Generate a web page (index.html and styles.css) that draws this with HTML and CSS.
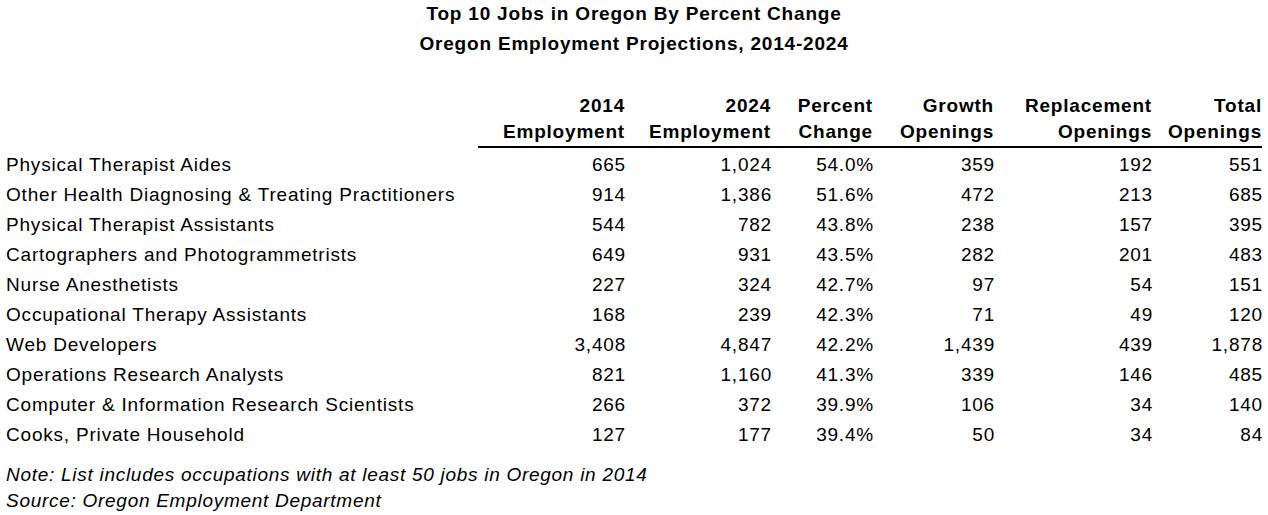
FILE: index.html
```html
<!DOCTYPE html>
<html lang="en">
<head>
    <meta charset="UTF-8">
    <title>Top 10 Jobs in Oregon By Percent Change</title>
    <link rel="stylesheet" href="styles.css">
</head>
<body>
    <div class="page">
        <div class="titles">
            <h1>Top 10 Jobs in Oregon By Percent Change</h1>
            <h2>Oregon Employment Projections, 2014-2024</h2>
        </div>

        <div class="jobs-table">
            <div class="head blank"></div>
            <div class="head">2014<br>Employment</div>
            <div class="head">2024<br>Employment</div>
            <div class="head">Percent<br>Change</div>
            <div class="head">Growth<br>Openings</div>
            <div class="head">Replacement<br>Openings</div>
            <div class="head">Total<br>Openings</div>

            <div class="name">Physical Therapist Aides</div>
            <div>665</div><div>1,024</div><div>54.0%</div><div>359</div><div>192</div><div>551</div>

            <div class="name">Other Health Diagnosing &amp; Treating Practitioners</div>
            <div>914</div><div>1,386</div><div>51.6%</div><div>472</div><div>213</div><div>685</div>

            <div class="name">Physical Therapist Assistants</div>
            <div>544</div><div>782</div><div>43.8%</div><div>238</div><div>157</div><div>395</div>

            <div class="name">Cartographers and Photogrammetrists</div>
            <div>649</div><div>931</div><div>43.5%</div><div>282</div><div>201</div><div>483</div>

            <div class="name">Nurse Anesthetists</div>
            <div>227</div><div>324</div><div>42.7%</div><div>97</div><div>54</div><div>151</div>

            <div class="name">Occupational Therapy Assistants</div>
            <div>168</div><div>239</div><div>42.3%</div><div>71</div><div>49</div><div>120</div>

            <div class="name">Web Developers</div>
            <div>3,408</div><div>4,847</div><div>42.2%</div><div>1,439</div><div>439</div><div>1,878</div>

            <div class="name">Operations Research Analysts</div>
            <div>821</div><div>1,160</div><div>41.3%</div><div>339</div><div>146</div><div>485</div>

            <div class="name">Computer &amp; Information Research Scientists</div>
            <div>266</div><div>372</div><div>39.9%</div><div>106</div><div>34</div><div>140</div>

            <div class="name">Cooks, Private Household</div>
            <div>127</div><div>177</div><div>39.4%</div><div>50</div><div>34</div><div>84</div>
        </div>

        <div class="notes">
            <p>Note: List includes occupations with at least 50 jobs in Oregon in 2014</p>
            <p>Source: Oregon Employment Department</p>
        </div>
    </div>
</body>
</html>
```

FILE: styles.css
```css
* {
    margin: 0;
    padding: 0;
    box-sizing: border-box;
}

body {
    background: #fff;
    color: #000;
    font-family: 'Liberation Sans', Arial, sans-serif;
    font-size: 19px;
    letter-spacing: 0.8px;
}

.page {
    width: 1268px;
}

.titles {
    text-align: center;
    font-weight: bold;
    line-height: 30px;
    margin-top: -1px;
}

.titles h1,
.titles h2 {
    font-size: inherit;
}

.jobs-table {
    display: grid;
    grid-template-columns: 478px 147px 146px 102px 121px 158px 110px;
    margin-top: 34px;
    line-height: 30px;
}

.jobs-table > div {
    text-align: right;
    white-space: nowrap;
    margin-right: -1px;
}

.jobs-table .head {
    font-weight: bold;
    line-height: 26px;
    padding-bottom: 1px;
    border-bottom: 2px solid #000;
    margin-bottom: 2px;
    margin-right: 0;
}

.jobs-table .head.blank {
    border-bottom-color: transparent;
}

.jobs-table .name {
    text-align: left;
    padding-left: 6px;
}

.notes {
    margin-top: 12px;
    padding-left: 6px;
    font-style: italic;
    letter-spacing: 0.72px;
    line-height: 26px;
}
```
